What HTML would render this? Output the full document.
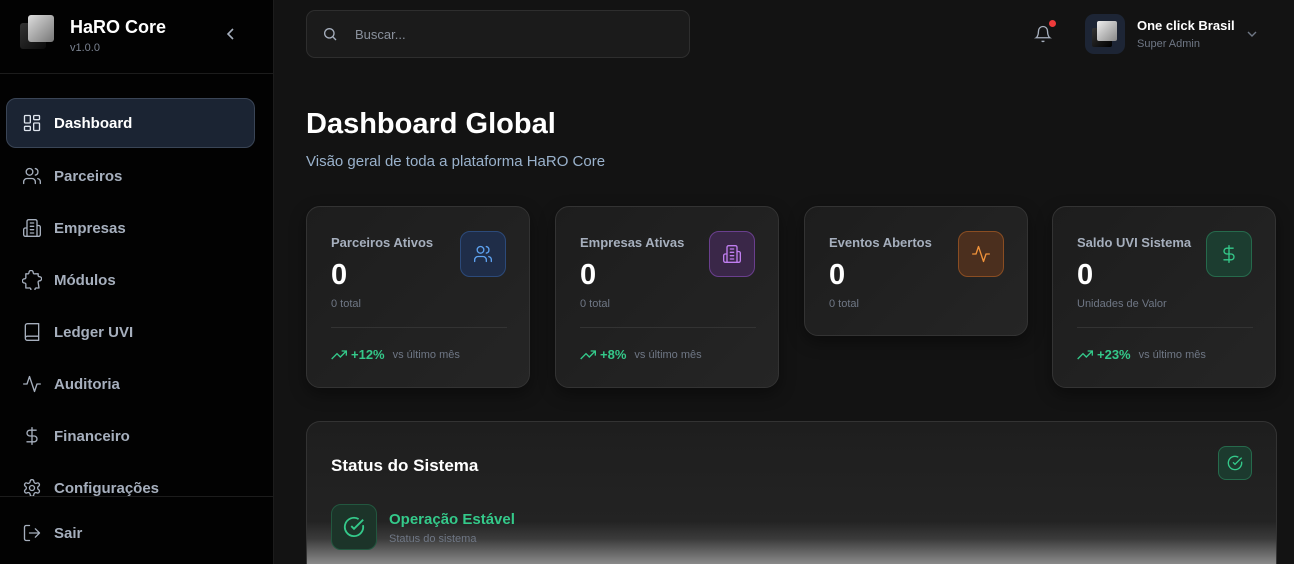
<!DOCTYPE html>
<html><head><meta charset="utf-8"><style>
*{box-sizing:border-box;margin:0;padding:0}
html{width:1294px;height:564px;overflow:hidden}
body{width:1294px;height:564px;overflow:hidden;background:#131313;font-family:"Liberation Sans",sans-serif;position:relative}
.sb{position:absolute;left:0;top:0;width:274px;height:564px;background:#020202;border-right:1px solid #1c1c1c}
.logo{position:absolute;left:18px;top:14px;width:38px;height:38px}
.logo .a{position:absolute;left:2px;top:9px;width:26px;height:26px;background:linear-gradient(135deg,#333,#0a0a0a);border-radius:3px}
.logo .b{position:absolute;left:10px;top:1px;width:26px;height:27px;background:linear-gradient(135deg,#ddd,#777);border-radius:3px}
.it{position:absolute;left:22px;height:24px;display:flex;align-items:center;color:#a6afbd;font-size:15px;font-weight:bold}
.it svg{width:20px;height:20px;margin-right:12px;stroke:#a6afbd;fill:none;stroke-width:1.6;stroke-linecap:round;stroke-linejoin:round}
.card{position:absolute;top:206px;width:224px;height:182px;border:1px solid #333;border-radius:14px;background:linear-gradient(135deg,#1d1d1d,#252525);box-shadow:0 6px 16px rgba(0,0,0,.4)}
.card .t{position:absolute;left:24px;top:28px;color:#a6afbd;font-size:13px;font-weight:bold}
.card .v{position:absolute;left:24px;top:52px;color:#fff;font-size:29px;font-weight:bold}
.card .s{position:absolute;left:24px;top:91px;color:#6f7785;font-size:11px}
.card .ic{position:absolute;left:153px;top:24px;width:46px;height:46px;border-radius:10px;display:flex;align-items:center;justify-content:center}
.card .ic svg{width:20px;height:20px;fill:none;stroke-width:1.6;stroke-linecap:round;stroke-linejoin:round}
.card .hr{position:absolute;left:24px;right:22px;top:120px;border-top:1px solid #333}
.card .f{position:absolute;left:24px;top:140px;display:flex;align-items:center;font-size:11px;color:#6f7785}
.card .f b{color:#34c98a;font-size:13px;margin:0 8px 0 4px}
</style></head><body>
<div class="sb">
 <div class="logo"><div class="a"></div><div class="b"></div></div>
 <div style="position:absolute;left:70px;top:17px;color:#fff;font-size:18px;font-weight:bold">HaRO Core</div>
 <div style="position:absolute;left:70px;top:42px;color:#7b8391;font-size:11px">v1.0.0</div>
 <svg style="position:absolute;left:224px;top:27px" width="14" height="14" viewBox="0 0 14 14"><path d="M9 2L4 7l5 5" stroke="#a6afbd" stroke-width="1.6" fill="none"/></svg>
 <div style="position:absolute;left:0;top:73px;width:273px;border-top:1px solid #1c1c1c"></div>
 <div style="position:absolute;left:6px;top:98px;width:249px;height:50px;border:1px solid #3a4556;border-radius:10px;background:#1b2433"></div>
 <div class="it" style="top:111px;color:#fff"><svg viewBox="0 0 24 24" style="stroke:#dfe5ee"><rect x="3" y="3" width="7" height="9" rx="1"/><rect x="14" y="3" width="7" height="5" rx="1"/><rect x="14" y="12" width="7" height="9" rx="1"/><rect x="3" y="16" width="7" height="5" rx="1"/></svg>Dashboard</div>
 <div class="it" style="top:164px"><svg viewBox="0 0 24 24"><circle cx="9" cy="7" r="4"/><path d="M2 21v-2a4 4 0 0 1 4-4h6a4 4 0 0 1 4 4v2M16 3.1a4 4 0 0 1 0 7.8M22 21v-2a4 4 0 0 0-3-3.9"/></svg>Parceiros</div>
 <div class="it" style="top:216px"><svg viewBox="0 0 24 24"><path d="M6 22V4a2 2 0 0 1 2-2h8a2 2 0 0 1 2 2v18zM6 12H4a2 2 0 0 0-2 2v6a2 2 0 0 0 2 2h2M18 9h2a2 2 0 0 1 2 2v9a2 2 0 0 1-2 2h-2M10 6h4M10 10h4M10 14h4M10 18h4"/></svg>Empresas</div>
 <div class="it" style="top:268px"><svg viewBox="0 0 24 24"><path d="M19.4 15a1.6 1.6 0 0 1 1.6-2 2.5 2.5 0 1 0 0-5 1.6 1.6 0 0 1-1.6-2V4.6h-4a1.6 1.6 0 0 1-2-1.6 2.5 2.5 0 1 0-5 0 1.6 1.6 0 0 1-2 1.6H4.6v4a1.6 1.6 0 0 1-1.6 2 2.5 2.5 0 1 0 0 5 1.6 1.6 0 0 1 1.6 2v4h4a1.6 1.6 0 0 1 2 1.6 2.5 2.5 0 1 0 5 0 1.6 1.6 0 0 1 2-1.6h2.8z"/></svg>Módulos</div>
 <div class="it" style="top:320px"><svg viewBox="0 0 24 24"><path d="M4 19.5v-15A2.5 2.5 0 0 1 6.5 2H20v20H6.5a2.5 2.5 0 0 1 0-5H20"/></svg>Ledger UVI</div>
 <div class="it" style="top:372px"><svg viewBox="0 0 24 24"><path d="M22 12h-4l-3 9L9 3l-3 9H2"/></svg>Auditoria</div>
 <div class="it" style="top:424px"><svg viewBox="0 0 24 24"><path d="M12 2v20M17 5H9.5a3.5 3.5 0 0 0 0 7h5a3.5 3.5 0 0 1 0 7H6"/></svg>Financeiro</div>
 <div class="it" style="top:476px"><svg viewBox="0 0 24 24"><circle cx="12" cy="12" r="3"/><path d="M12.2 2h-.4a2 2 0 0 0-2 2v.2a2 2 0 0 1-1 1.7l-.4.3a2 2 0 0 1-2 0l-.2-.1a2 2 0 0 0-2.7.7l-.2.4a2 2 0 0 0 .7 2.7l.2.1a2 2 0 0 1 1 1.7v.5a2 2 0 0 1-1 1.7l-.2.1a2 2 0 0 0-.7 2.7l.2.4a2 2 0 0 0 2.7.7l.2-.1a2 2 0 0 1 2 0l.4.3a2 2 0 0 1 1 1.7v.2a2 2 0 0 0 2 2h.4a2 2 0 0 0 2-2v-.2a2 2 0 0 1 1-1.7l.4-.3a2 2 0 0 1 2 0l.2.1a2 2 0 0 0 2.7-.7l.2-.4a2 2 0 0 0-.7-2.7l-.2-.1a2 2 0 0 1-1-1.7v-.5a2 2 0 0 1 1-1.7l.2-.1a2 2 0 0 0 .7-2.7l-.2-.4a2 2 0 0 0-2.7-.7l-.2.1a2 2 0 0 1-2 0l-.4-.3a2 2 0 0 1-1-1.7V4a2 2 0 0 0-2-2z"/></svg>Configurações</div>
 <div style="position:absolute;left:0;top:496px;width:273px;height:68px;border-top:1px solid #1c1c1c;background:#020202"></div>
 <div class="it" style="top:521px"><svg viewBox="0 0 24 24"><path d="M9 21H5a2 2 0 0 1-2-2V5a2 2 0 0 1 2-2h4M16 17l5-5-5-5M21 12H9"/></svg>Sair</div>
</div>

<div style="position:absolute;left:306px;top:10px;width:384px;height:48px;border:1px solid #2e2e2e;border-radius:9px;background:#1b1b1b"></div>
<svg style="position:absolute;left:322px;top:26px" width="16" height="16" viewBox="0 0 24 24" fill="none" stroke="#a6afbd" stroke-width="2"><circle cx="11" cy="11" r="7"/><path d="M21 21l-4.3-4.3"/></svg>
<div style="position:absolute;left:355px;top:27px;color:#8a919c;font-size:13px">Buscar...</div>

<svg style="position:absolute;left:1034px;top:25px" width="18" height="18" viewBox="0 0 24 24" fill="none" stroke="#a6afbd" stroke-width="1.8"><path d="M6 8a6 6 0 0 1 12 0c0 7 3 9 3 9H3s3-2 3-9M10.3 21a1.9 1.9 0 0 0 3.4 0"/></svg>
<div style="position:absolute;left:1049px;top:20px;width:7px;height:7px;border-radius:50%;background:#ef3b3b"></div>
<div style="position:absolute;left:1085px;top:14px;width:40px;height:40px;border-radius:9px;background:#1d2535"></div>
<div style="position:absolute;left:1092px;top:28px;width:20px;height:19px;background:linear-gradient(135deg,#333,#000);border-radius:2px"></div>
<div style="position:absolute;left:1097px;top:21px;width:20px;height:20px;background:linear-gradient(135deg,#eee,#888);border-radius:2px"></div>
<div style="position:absolute;left:1137px;top:18px;color:#fff;font-size:13px;font-weight:bold">One click Brasil</div>
<div style="position:absolute;left:1137px;top:38px;color:#6f7785;font-size:11px">Super Admin</div>
<svg style="position:absolute;left:1246px;top:29px" width="12" height="10" viewBox="0 0 12 10"><path d="M2 3l4 4 4-4" stroke="#6f7785" stroke-width="1.4" fill="none"/></svg>

<div style="position:absolute;left:306px;top:108px;color:#fff;font-size:29px;font-weight:bold">Dashboard Global</div>
<div style="position:absolute;left:306px;top:153px;color:#9ab2cc;font-size:15px">Visão geral de toda a plataforma HaRO Core</div>

<div class="card" style="left:306px"><div class="t">Parceiros Ativos</div><div class="v">0</div><div class="s">0 total</div>
 <div class="ic" style="background:#1f2d48;border:1px solid #2c4a7a"><svg viewBox="0 0 24 24" stroke="#5ea2f0"><circle cx="9" cy="7" r="4"/><path d="M2 21v-2a4 4 0 0 1 4-4h6a4 4 0 0 1 4 4v2M16 3.1a4 4 0 0 1 0 7.8M22 21v-2a4 4 0 0 0-3-3.9"/></svg></div>
 <div class="hr"></div><div class="f"><svg width="16" height="12" viewBox="0 0 24 16" fill="none" stroke="#34c98a" stroke-width="2"><path d="M1 14l8-8 5 5 9-9M16 2h7v7"/></svg><b>+12%</b>vs último mês</div></div>
<div class="card" style="left:555px"><div class="t">Empresas Ativas</div><div class="v">0</div><div class="s">0 total</div>
 <div class="ic" style="background:#3a2748;border:1px solid #6a3f8e"><svg viewBox="0 0 24 24" stroke="#c07ef0"><path d="M6 22V4a2 2 0 0 1 2-2h8a2 2 0 0 1 2 2v18zM6 12H4a2 2 0 0 0-2 2v6a2 2 0 0 0 2 2h2M18 9h2a2 2 0 0 1 2 2v9a2 2 0 0 1-2 2h-2M10 6h4M10 10h4M10 14h4M10 18h4"/></svg></div>
 <div class="hr"></div><div class="f"><svg width="16" height="12" viewBox="0 0 24 16" fill="none" stroke="#34c98a" stroke-width="2"><path d="M1 14l8-8 5 5 9-9M16 2h7v7"/></svg><b>+8%</b>vs último mês</div></div>
<div class="card" style="left:804px;height:130px"><div class="t">Eventos Abertos</div><div class="v">0</div><div class="s">0 total</div>
 <div class="ic" style="background:#4b2f1e;border:1px solid #8a4d22"><svg viewBox="0 0 24 24" stroke="#f0923a"><path d="M22 12h-4l-3 9L9 3l-3 9H2"/></svg></div></div>
<div class="card" style="left:1052px"><div class="t">Saldo UVI Sistema</div><div class="v">0</div><div class="s">Unidades de Valor</div>
 <div class="ic" style="background:#1c3d30;border:1px solid #266a4c"><svg viewBox="0 0 24 24" stroke="#34c98a"><path d="M12 2v20M17 5H9.5a3.5 3.5 0 0 0 0 7h5a3.5 3.5 0 0 1 0 7H6"/></svg></div>
 <div class="hr"></div><div class="f"><svg width="16" height="12" viewBox="0 0 24 16" fill="none" stroke="#34c98a" stroke-width="2"><path d="M1 14l8-8 5 5 9-9M16 2h7v7"/></svg><b>+23%</b>vs último mês</div></div>

<div style="position:absolute;left:306px;top:421px;width:971px;height:143px;border:1px solid #333;border-bottom:none;border-radius:14px 14px 0 0;background:linear-gradient(180deg,#1e1e1e 0%,#232323 70%,#3a3a3a 82%,#8a8a8a 100%);overflow:hidden">
 <div style="position:absolute;left:24px;top:34px;color:#fff;font-size:17px;font-weight:bold">Status do Sistema</div>
 <div style="position:absolute;left:911px;top:24px;width:34px;height:34px;border-radius:8px;background:#1c3a2e;border:1px solid #266a4c;display:flex;align-items:center;justify-content:center"><svg width="16" height="16" viewBox="0 0 24 24" fill="none" stroke="#34c98a" stroke-width="2"><path d="M21.8 10A10 10 0 1 1 17 3.3"/><path d="M9 11l3 3L22 4"/></svg></div>
 <div style="position:absolute;left:24px;top:82px;width:46px;height:46px;border-radius:10px;background:#1c3429;border:1px solid #22573f;display:flex;align-items:center;justify-content:center"><svg width="22" height="22" viewBox="0 0 24 24" fill="none" stroke="#34c98a" stroke-width="2"><path d="M21.8 10A10 10 0 1 1 17 3.3"/><path d="M9 11l3 3L22 4"/></svg></div>
 <div style="position:absolute;left:82px;top:89px;color:#34c98a;font-size:15px;font-weight:bold">Operação Estável</div>
 <div style="position:absolute;left:82px;top:111px;color:#6f7785;font-size:11px">Status do sistema</div>
</div>
</body></html>
